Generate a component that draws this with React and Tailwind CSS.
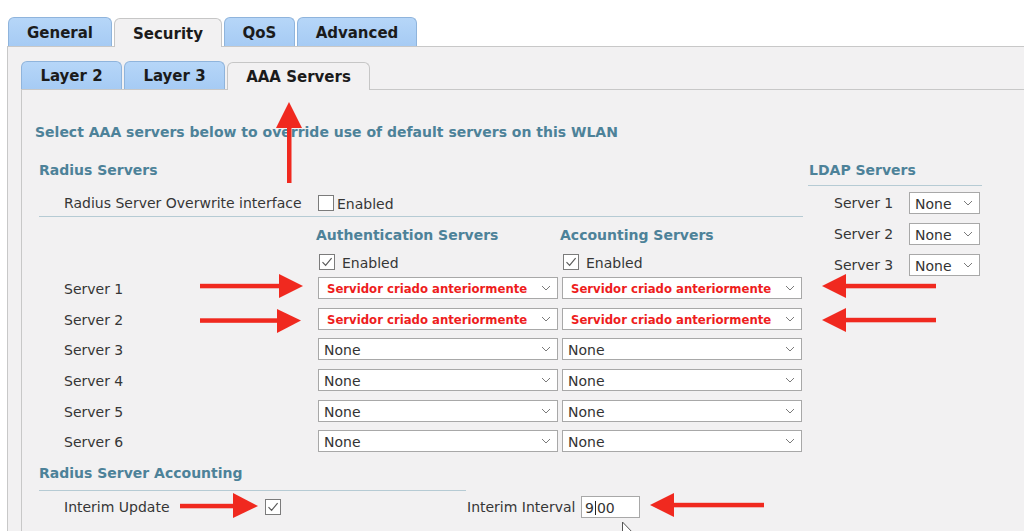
import React from 'react';

const heading = 'text-[14px] font-bold leading-[20px] text-[#4d8299]';
const body = 'text-[14px] leading-[20px] text-[#363636]';

function Check({ checked }) {
  return (
    <span className="inline-flex h-[16px] w-[16px] shrink-0 items-center justify-center border border-[#7b7b7b] bg-white">
      {checked && (
        <svg width="12" height="12" viewBox="0 0 12 12">
          <path d="M1.5 6.2 L4.6 9.3 L10.6 2.2" fill="none" stroke="#5a5a5a" strokeWidth="1.2" />
        </svg>
      )}
    </span>
  );
}

function Select({ value, red, className = '' }) {
  return (
    <div
      className={`flex h-[22px] shrink-0 items-center justify-between border border-[#a8a8a8] bg-white pr-[6px] ${red ? 'pl-[8px]' : 'pl-[5px]'} ${className}`}
    >
      <span
        className={
          red
            ? 'pt-[3px] text-[11.7px] font-bold leading-none text-[#ee1d1d]'
            : 'pt-[2px] text-[14px] leading-none text-[#333]'
        }
      >
        {value}
      </span>
      <svg width="10" height="6" viewBox="0 0 10 6">
        <path d="M1 1 L5 5 L9 1" fill="none" stroke="#7a7a7a" strokeWidth="1" />
      </svg>
    </div>
  );
}

function Tab({ label, active, className = '' }) {
  return (
    <div
      className={`flex items-center justify-center rounded-t-[6px] border border-b-0 pt-[2px] text-[15px] font-bold text-[#1b1b1b] ${
        active
          ? 'relative z-10 -mb-px border-[#c6c6c6] bg-[#f2f1f2]'
          : 'border-[#8fb4dc] bg-gradient-to-b from-[#b6d6f8] to-[#a6cbf4]'
      } ${className}`}
    >
      {label}
    </div>
  );
}

const radiusRows = [
  { label: 'Server 1', value: 'Servidor criado anteriormente', red: true },
  { label: 'Server 2', value: 'Servidor criado anteriormente', red: true },
  { label: 'Server 3', value: 'None' },
  { label: 'Server 4', value: 'None' },
  { label: 'Server 5', value: 'None' },
  { label: 'Server 6', value: 'None' },
];

function Arrows() {
  const red = '#f0291f';
  return (
    <svg className="pointer-events-none absolute inset-0" width="1024" height="531" viewBox="0 0 1024 531">
      {/* up arrow to AAA Servers tab */}
      <rect x="287" y="124" width="4.5" height="59" fill={red} />
      <polygon points="289,102 302,128 276,128" fill={red} />
      {/* arrows to auth selects */}
      <rect x="200" y="283.8" width="82" height="4.5" fill={red} />
      <polygon points="279,274 303,286 279,298" fill={red} />
      <rect x="200" y="318.3" width="82" height="4.5" fill={red} />
      <polygon points="277,309 301,320.5 277,333" fill={red} />
      {/* arrows to accounting selects */}
      <rect x="843" y="283.8" width="93" height="4.5" fill={red} />
      <polygon points="846,274 822,286 846,298" fill={red} />
      <rect x="843" y="317.8" width="93" height="4.5" fill={red} />
      <polygon points="846,308 822,320 846,332" fill={red} />
      {/* interim update */}
      <rect x="180" y="503.8" width="56" height="4.5" fill={red} />
      <polygon points="233,493 258,506 233,518" fill={red} />
      {/* interim interval */}
      <rect x="671" y="502.8" width="93" height="4.5" fill={red} />
      <polygon points="674,493 650,505 674,517" fill={red} />
      {/* mouse cursor */}
      <polygon points="622.5,522 622.5,540 634,534" fill="#fff" stroke="#555" strokeWidth="1" />
    </svg>
  );
}

export default function App() {
  return (
    <div className="relative h-[531px] w-[1024px] overflow-hidden bg-white font-['DejaVu_Sans',Verdana,sans-serif]">
      <div className="flex items-end gap-[2px] pl-[8px] pt-[17px]">
        <Tab label="General" className="h-[29px] w-[104px]" />
        <Tab label="Security" active className="h-[29px] w-[108px]" />
        <Tab label="QoS" className="h-[29px] w-[71px]" />
        <Tab label="Advanced" className="h-[29px] w-[120px]" />
      </div>

      <div className="ml-[7px] h-full border-l border-t border-[#c8c8c8] bg-[#f2f1f2] pl-[13px] pt-[14px]">
        <div className="flex items-end gap-[2px]">
          <Tab label="Layer 2" className="h-[28px] w-[101px]" />
          <Tab label="Layer 3" className="h-[28px] w-[101px]" />
          <Tab label="AAA Servers" active className="h-[28px] w-[143px]" />
        </div>

        <div className="h-full border-l border-t border-[#c8c8c8] pl-[13px] pt-[32px]">
          <div className={heading}>
            Select AAA servers below to override use of default servers on this WLAN
          </div>

          <div className="ml-[4px] mt-[18px] flex">
            {/* Radius column */}
            <div className="w-[764px]">
              <div className={heading}>Radius Servers</div>

              <div className="mt-[9px] flex h-[28px] items-center border-b border-[#b6cbd4]">
                <div className={`w-[279px] pl-[25px] ${body}`}>Radius Server Overwrite interface</div>
                <Check />
                <span className={`ml-[3px] mt-[2px] ${body}`}>Enabled</span>
              </div>

              <div className="mt-[8px] flex h-[20px]">
                <div className="w-[277px]" />
                <div className={`w-[244px] ${heading}`}>Authentication Servers</div>
                <div className={heading}>Accounting Servers</div>
              </div>

              <div className="mt-[7px] flex h-[20px] items-center">
                <div className="w-[279px]" />
                <div className="flex w-[244px] items-center pl-px">
                  <Check checked />
                  <span className={`ml-[7px] mt-[2px] ${body}`}>Enabled</span>
                </div>
                <div className="flex items-center pl-px">
                  <Check checked />
                  <span className={`ml-[7px] mt-[2px] ${body}`}>Enabled</span>
                </div>
              </div>

              <div className="pt-[1px]">
                {radiusRows.map((r) => (
                  <div key={r.label} className="flex h-[30.6px] items-center">
                    <div className={`w-[279px] pl-[25px] pt-[2px] ${body}`}>{r.label}</div>
                    <Select value={r.value} red={r.red} className="w-[240px]" />
                    <Select value={r.value} red={r.red} className="ml-[4px] w-[240px]" />
                  </div>
                ))}
              </div>

              <div className="mt-[6px] h-[28px] w-[427px] border-b border-[#b6cbd4]">
                <div className={heading}>Radius Server Accounting</div>
              </div>

              <div className="mt-[5px] flex h-[22px] items-center">
                <div className="flex w-[427px] items-center pl-[25px]">
                  <div className={`w-[201px] ${body}`}>Interim Update</div>
                  <Check checked />
                </div>
                <div className={`ml-px w-[113px] ${body}`}>Interim Interval</div>
                <div className="ml-px flex h-[22px] w-[59px] items-center border border-[#a8a8a8] bg-white pl-[3px] pt-[2px] text-[14px] leading-none text-[#333]">
                  9<span className="mx-px inline-block h-[14px] w-px bg-[#222]" />00
                </div>
              </div>
            </div>

            {/* LDAP column */}
            <div className="ml-[5px] w-[174px]">
              <div className={`h-[26px] border-b border-[#b6cbd4] pl-px ${heading}`}>LDAP Servers</div>
              <div className="mt-[1px]">
                {['Server 1', 'Server 2', 'Server 3'].map((s) => (
                  <div key={s} className="flex h-[31px] items-center">
                    <div className={`w-[101px] pl-[26px] ${body}`}>{s}</div>
                    <Select value="None" className="w-[71px]" />
                  </div>
                ))}
              </div>
            </div>
          </div>
        </div>
      </div>

      <Arrows />
    </div>
  );
}
